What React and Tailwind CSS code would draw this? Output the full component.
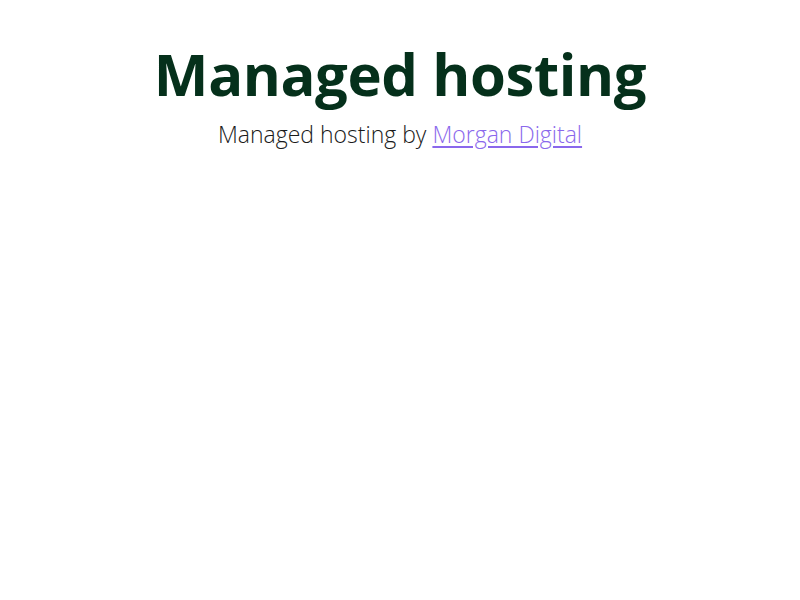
import React from 'react';

export default function App() {
  return (
    <div className="min-h-screen bg-white flex flex-col items-center pt-[38px] font-['Open_Sans',sans-serif]">
      <h1 className="text-[58px] leading-[72px] font-bold text-[#05301b] tracking-[-0.4px]">
        Managed hosting
      </h1>
      <p className="mt-[9px] text-[23px] leading-[30px] font-light text-[#1a1a1a]">
        Managed hosting by{' '}
        <a href="#" className="text-[#8a68ec] underline underline-offset-[3px]">
          Morgan Digital
        </a>
      </p>
    </div>
  );
}
